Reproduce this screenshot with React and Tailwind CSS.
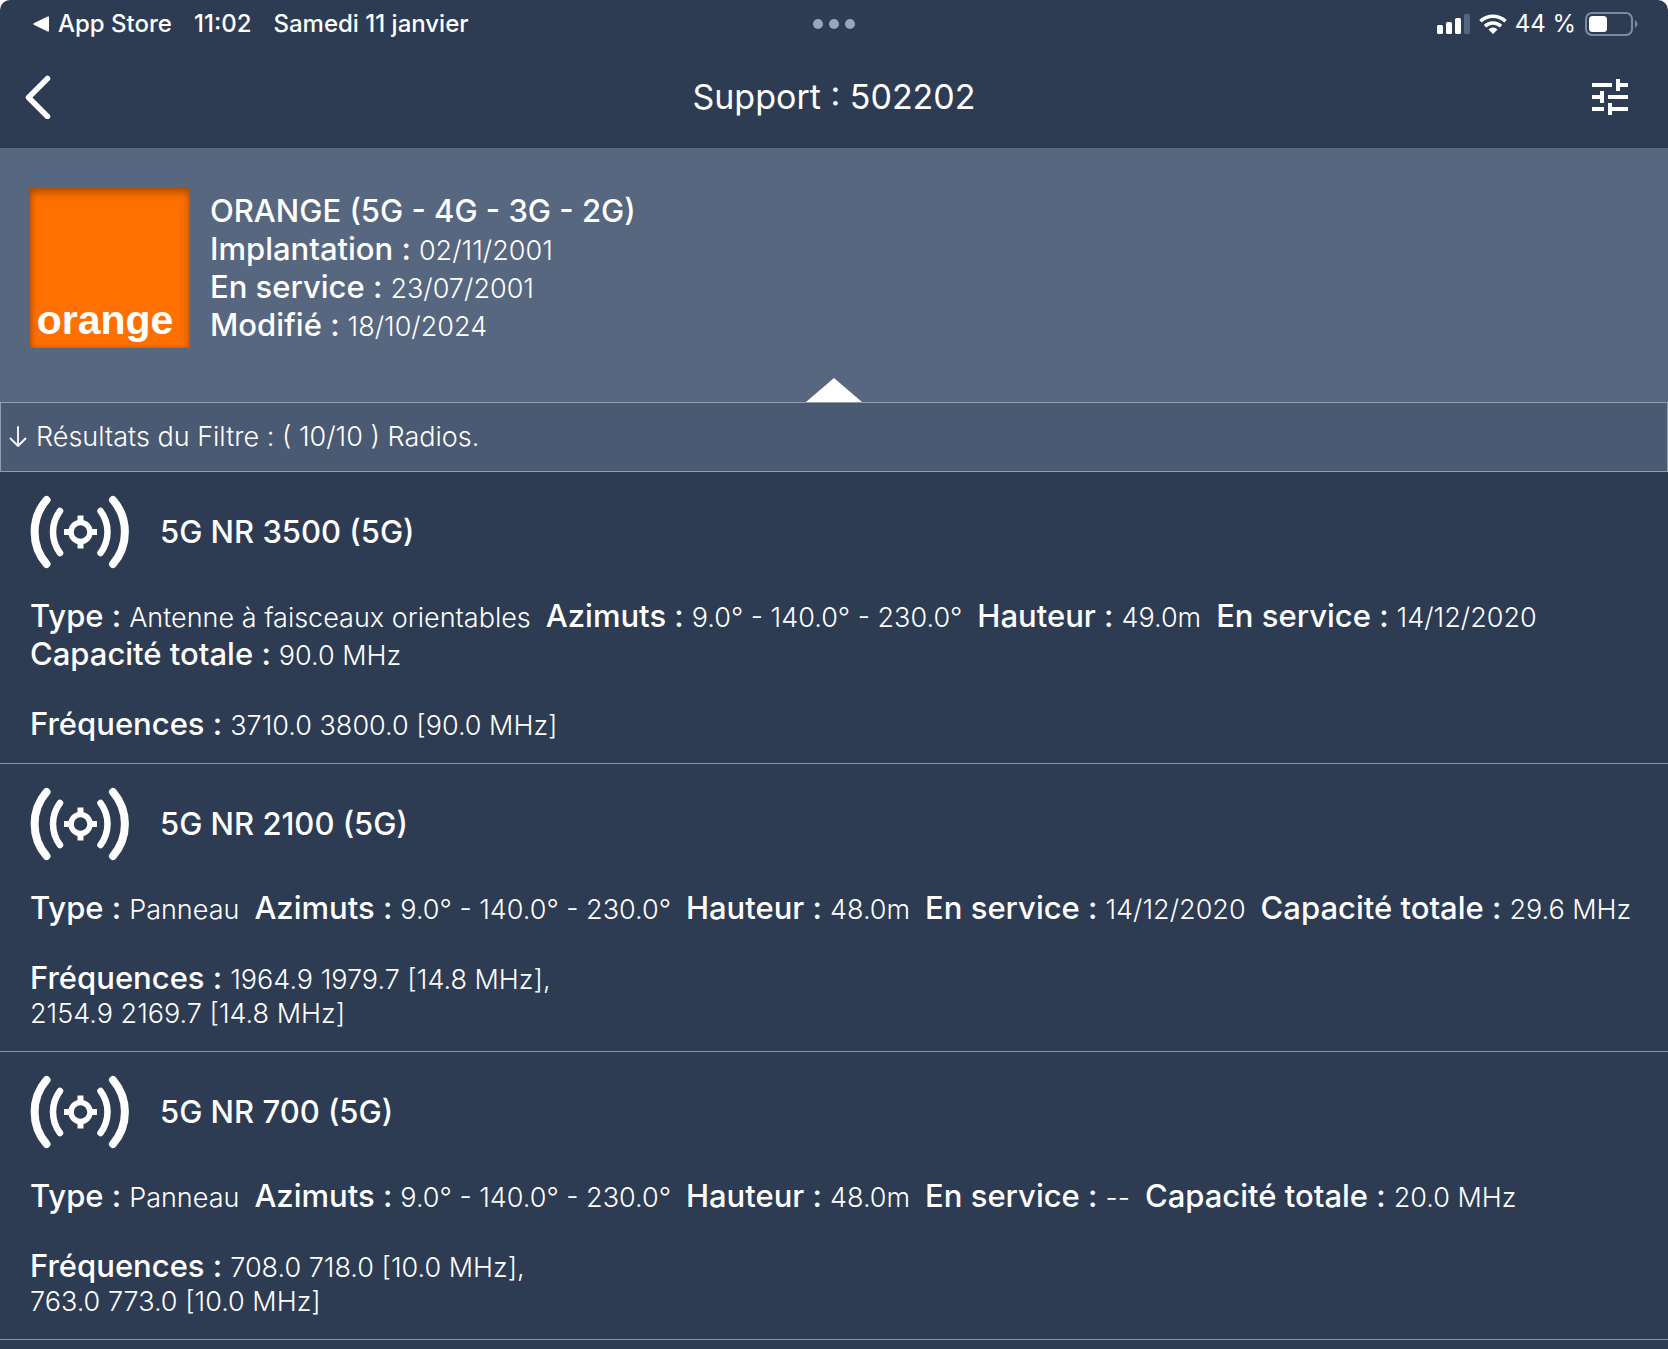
import React from "react";

const radios = [
  {
    name: "5G NR 3500 (5G)",
    details: [
      ["Type :", "Antenne à faisceaux orientables"],
      ["Azimuts :", "9.0° - 140.0° - 230.0°"],
      ["Hauteur :", "49.0m"],
      ["En service :", "14/12/2020"],
      ["Capacité totale :", "90.0 MHz"],
    ],
    frequencies: ["3710.0 3800.0 [90.0 MHz]"],
  },
  {
    name: "5G NR 2100 (5G)",
    details: [
      ["Type :", "Panneau"],
      ["Azimuts :", "9.0° - 140.0° - 230.0°"],
      ["Hauteur :", "48.0m"],
      ["En service :", "14/12/2020"],
      ["Capacité totale :", "29.6 MHz"],
    ],
    frequencies: ["1964.9 1979.7 [14.8 MHz],", "2154.9 2169.7 [14.8 MHz]"],
  },
  {
    name: "5G NR 700 (5G)",
    details: [
      ["Type :", "Panneau"],
      ["Azimuts :", "9.0° - 140.0° - 230.0°"],
      ["Hauteur :", "48.0m"],
      ["En service :", "--"],
      ["Capacité totale :", "20.0 MHz"],
    ],
    frequencies: ["708.0 718.0 [10.0 MHz],", "763.0 773.0 [10.0 MHz]"],
  },
];

const operatorDates = [
  ["Implantation :", "02/11/2001"],
  ["En service :", "23/07/2001"],
  ["Modifié :", "18/10/2024"],
];

function StatusBar() {
  return (
    <div className="grid h-12 grid-cols-[1fr_auto_1fr] items-center px-[30px] text-[24px] font-medium">
      <div className="flex items-center gap-[22px]">
        <button type="button" className="flex items-center gap-2 pl-0.5">
          <svg width="18" height="16" viewBox="0 0 18 16" fill="currentColor" aria-hidden="true">
            <path d="M1.8 7.2 15.6.5Q17 0 17 1.400V14.600Q17 16 15.600 15.500L1.800 8.800Q.4 8 1.800 7.200Z" />
          </svg>
          App Store
        </button>
        <span>11:02</span>
        <span>Samedi 11 janvier</span>
      </div>
      <button type="button" aria-label="Multitâche" className="flex gap-[6px]">
        <span className="size-[10px] rounded-full bg-[#97a6c0]" />
        <span className="size-[10px] rounded-full bg-[#97a6c0]" />
        <span className="size-[10px] rounded-full bg-[#97a6c0]" />
      </button>
      <div className="flex items-center justify-end gap-2">
        <svg width="34" height="20" viewBox="0 0 34 20" fill="currentColor" aria-hidden="true">
          <rect x="0" y="11" width="6" height="9" rx="1.500" />
          <rect x="9" y="8" width="6" height="12" rx="1.500" />
          <rect x="18" y="4" width="6" height="16" rx="1.500" />
          <rect x="27" y="0" width="6" height="20" rx="1.500" fill="#56657d" />
        </svg>
        <svg width="28" height="20" viewBox="0 0 28 20" fill="none" stroke="currentColor" strokeWidth="3.600" aria-hidden="true">
          <path d="M1.500 7.300a18 18 0 0 1 25 0" />
          <path d="M6 12.300a11.500 11.500 0 0 1 16 0" />
          <path d="M14 20 9.500 15.400a6.500 6.500 0 0 1 9 0Z" fill="currentColor" stroke="none" />
        </svg>
        <span className="font-normal">44 %</span>
        <svg width="54" height="24" viewBox="0 0 54 24" aria-hidden="true">
          <rect x="2" y="1" width="46" height="22" rx="6" fill="none" stroke="#818b9c" strokeWidth="2" />
          <rect x="5" y="4" width="18" height="16" rx="3.500" fill="#fff" />
          <path d="M51 8q5 4 0 8z" fill="#818b9c" />
        </svg>
      </div>
    </div>
  );
}

function NavBar() {
  return (
    <div className="grid h-[100px] grid-cols-[1fr_auto_1fr] items-center px-6 pb-0.5">
      <button type="button" aria-label="Retour" className="justify-self-start">
        <svg width="28" height="44" viewBox="0 0 28 44" fill="none" stroke="#fff" strokeWidth="5.500" strokeLinecap="round" strokeLinejoin="round">
          <path d="M23.500 3.500 4.500 22.500l19 19" />
        </svg>
      </button>
      <h1 className="text-[34px] leading-[44px]">Support : 502202</h1>
      <button type="button" aria-label="Filtres" className="mr-2.5 justify-self-end">
        <svg width="48" height="48" viewBox="0 0 24 24" fill="currentColor">
          <path d="M3 17v2h6v-2H3zM3 5v2h10V5H3zm10 16v-2h8v-2h-8v-2h-2v6h2zM7 9v2H3v2h4v2h2V9H7zm14 4v-2H11v2h10zm-6-4h2V7h4V5h-4V3h-2v6z" />
        </svg>
      </button>
    </div>
  );
}

function OperatorCard() {
  return (
    <section className="flex flex-col bg-[#586780] pt-10">
      <div className="flex h-[190px] items-start gap-5 px-[30px]">
        <div className="flex size-40 shrink-0 items-end justify-center bg-[#ff7000] pr-2.5 pb-1 font-['Liberation_Sans',sans-serif] text-[41px] leading-[48px] font-bold shadow-[inset_0_4px_8px_#a84c00,inset_0_0_4px_#c85a00]">
          orange
        </div>
        <div className="pt-1">
          <h2 className="text-[31px] leading-[38px] font-medium">ORANGE (5G - 4G - 3G - 2G)</h2>
          <dl>
            {operatorDates.map(([label, value]) => (
              <Detail key={label} label={label} value={value} />
            ))}
          </dl>
        </div>
      </div>
      <svg className="self-center" width="56" height="24" viewBox="0 0 56 24" fill="#fff" aria-hidden="true">
        <path d="M28 0 56 24H0Z" />
      </svg>
    </section>
  );
}

function Detail({ label, value }) {
  return (
    <div className="flex items-baseline gap-2 whitespace-nowrap">
      <dt className="text-[31px] leading-[38px] font-medium">{label}</dt>
      <dd className="text-[27px] leading-[34px] font-light">{value}</dd>
    </div>
  );
}

function RadioIcon() {
  return (
    <svg width="100" height="74" viewBox="0 0 100 74" fill="none" stroke="#fff" strokeLinecap="round" aria-hidden="true">
      <path d="M16.500 5A49 49 0 0 0 16.500 69" strokeWidth="8" />
      <path d="M83 5A49 49 0 0 1 83 69" strokeWidth="8" />
      <path d="M30 16A35 35 0 0 0 30 58" strokeWidth="6.500" />
      <path d="M70.500 16A35 35 0 0 1 70.500 58" strokeWidth="6.500" />
      <circle cx="50.500" cy="37" r="9.500" strokeWidth="5.500" />
      <path d="M50.500 20.500v6M50.500 47.500v6M34 37h6M61 37h6" strokeWidth="6" strokeLinecap="butt" />
    </svg>
  );
}

function Radio({ radio }) {
  return (
    <li className="border-b border-[#8794ab] px-[30px] pt-[22px] pb-5">
      <div className="flex h-[76px] items-center gap-[30px]">
        <RadioIcon />
        <h3 className="text-[31px] font-medium">{radio.name}</h3>
      </div>
      <dl className="flex flex-wrap gap-x-[15px] pt-[27px]">
        {radio.details.map(([label, value]) => (
          <Detail key={label} label={label} value={value} />
        ))}
      </dl>
      <dl className="pt-8">
        <Detail label="Fréquences :" value={radio.frequencies[0]} />
        {radio.frequencies.slice(1).map((line) => (
          <dd key={line} className="text-[27px] leading-[34px] font-light">
            {line}
          </dd>
        ))}
      </dl>
    </li>
  );
}

export default function App() {
  return (
    <div className="bg-white">
      <div className="min-h-screen rounded-t-[10px] bg-[#2d3c53] font-['Inter',sans-serif] text-white">
        <header>
          <StatusBar />
          <NavBar />
        </header>
        <main>
          <OperatorCard />
          <p className="flex h-[70px] items-center gap-[9px] border border-[#8f9fb0] bg-[#4b5a73] px-2 text-[27px] font-light">
            <svg width="18" height="22" viewBox="0 0 18 22" fill="none" stroke="currentColor" strokeWidth="1.800" strokeLinecap="round" strokeLinejoin="round" aria-hidden="true">
              <path d="M9 1v19M1.500 12.500 9 20l7.500-7.500" />
            </svg>
            Résultats du Filtre : ( 10/10 ) Radios.
          </p>
          <ul>
            {radios.map((radio) => (
              <Radio key={radio.name} radio={radio} />
            ))}
          </ul>
        </main>
      </div>
    </div>
  );
}
